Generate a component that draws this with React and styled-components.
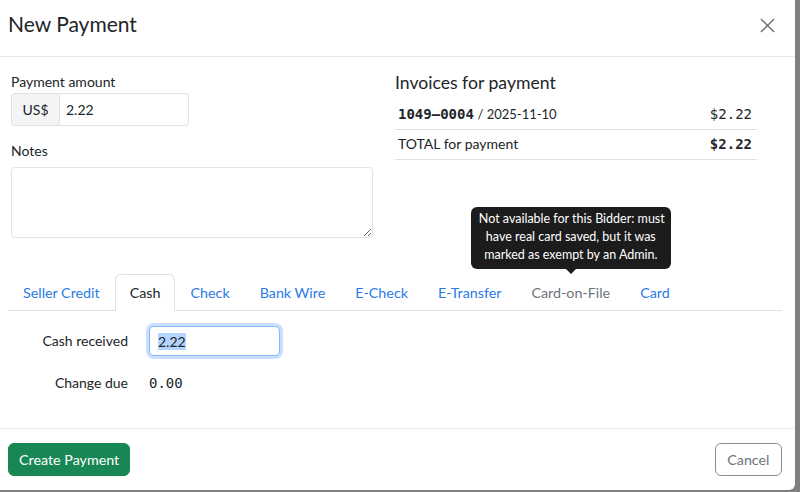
import { useEffect, useRef } from 'react';
import styled, { createGlobalStyle } from 'styled-components';

const GlobalStyle = createGlobalStyle`
  html, body {
    margin: 0;
    padding: 0;
  }

  body {
    background: #7f7f7f;
    font-family: Lato, "Noto Sans", sans-serif;
    color: #212529;
    overflow: hidden;
  }

  * {
    box-sizing: border-box;
  }
`;

const Page = styled.div`
  width: 800px;
  height: 492px;
`;

const Modal = styled.div`
  width: 795px;
  height: 490px;
  background: #fff;
  border-bottom-right-radius: 6px;
  display: flex;
  flex-direction: column;
`;

const Header = styled.div`
  height: 57px;
  border-bottom: 1px solid #e6e8ea;
  display: flex;
  align-items: flex-start;
  justify-content: space-between;
  padding: 12px 20px 0 8px;
`;

const Title = styled.h5`
  margin: 0;
  font-size: 21px;
  line-height: 24px;
  font-weight: 400;
  color: #212529;
`;

const CloseButton = styled.button`
  margin-top: 6px;
  width: 15px;
  height: 15px;
  padding: 0;
  border: none;
  background: none;
  color: #6b6b6b;
  cursor: pointer;

  svg {
    display: block;
    width: 15px;
    height: 15px;
  }
`;

const Body = styled.div`
  padding-top: 15px;
`;

const TopRow = styled.div`
  display: grid;
  grid-template-columns: 362px 362px;
  column-gap: 22px;
  padding-left: 11px;
`;

const Column = styled.div`
  display: flex;
  flex-direction: column;
`;

const FieldLabel = styled.label`
  font-size: 14px;
  line-height: 20px;
  margin: ${(p) => (p.$spaced ? '15px 0 6px' : '0 0 1px')};
`;

const InputGroup = styled.div`
  display: flex;
  width: 178px;
  height: 33px;
`;

const Addon = styled.span`
  width: 49px;
  display: flex;
  align-items: center;
  justify-content: center;
  font-size: 14px;
  background: #f3f4f5;
  border: 1px solid #dfe2e6;
  border-radius: 4px 0 0 4px;
`;

const AmountInput = styled.input`
  flex: 1;
  min-width: 0;
  font: inherit;
  font-size: 14px;
  color: #212529;
  padding: 0 6px;
  border: 1px solid #dfe2e6;
  border-left: none;
  border-radius: 0 4px 4px 0;
  outline: none;
`;

const NotesArea = styled.textarea`
  width: 362px;
  height: 71px;
  border: 1px solid #dfe2e6;
  border-radius: 4px;
  font: inherit;
  font-size: 14px;
  padding: 6px 8px;
  outline: none;
`;

const SectionTitle = styled.h5`
  margin: 0 0 6px;
  font-size: 17.6px;
  line-height: 22px;
  font-weight: 400;
`;

const InvoiceRow = styled.div`
  display: flex;
  align-items: baseline;
  justify-content: space-between;
  padding: 4px 5px 5px 3px;
  border-bottom: 1px solid #dee2e6;
  font-size: 14px;
  line-height: 20px;
`;

const Mono = styled.span`
  font-family: "DejaVu Sans Mono", "Liberation Mono", monospace;
  font-size: 14px;
  font-weight: ${(p) => (p.$bold ? 700 : 400)};
`;

const InvoiceDate = styled.span`
  font-size: 13px;
`;

const Tabs = styled.nav`
  display: flex;
  margin: 36px 13px 0 8px;
  border-bottom: 1px solid #dee2e6;
  height: 37px;
`;

const Tab = styled.a`
  position: relative;
  height: 37px;
  display: flex;
  align-items: center;
  padding: 0 14px;
  font-size: 14.3px;
  line-height: 20px;
  text-decoration: none;
  cursor: pointer;
  border: 1px solid transparent;
  border-radius: 6px 6px 0 0;
  color: ${(p) => (p.$disabled ? '#6c757d' : p.$active ? '#212529' : '#2a7be6')};

  ${(p) =>
    p.$active &&
    `
    background: #fff;
    border-color: #dee2e6 #dee2e6 #fff;
  `}
`;

const Tooltip = styled.div`
  position: absolute;
  bottom: calc(100% + 6px);
  left: 50%;
  transform: translateX(-50%);
  width: 200px;
  padding: 3px 8px 5px;
  background: #1c1c1c;
  color: #fff;
  border-radius: 6px;
  font-size: 12.5px;
  line-height: 18px;
  text-align: center;
  white-space: nowrap;

  &::after {
    content: '';
    position: absolute;
    top: 100%;
    left: 50%;
    margin-left: -5px;
    border: 5px solid transparent;
    border-top-color: #1c1c1c;
    border-bottom: none;
  }
`;

const Pane = styled.div`
  padding: 15px 0 0 8px;
  display: flex;
  flex-direction: column;
  gap: 17px;
`;

const FormRow = styled.div`
  display: flex;
  align-items: ${(p) => (p.$baseline ? 'baseline' : 'center')};
`;

const RowLabel = styled.label`
  width: 120px;
  margin-right: 21px;
  text-align: right;
  font-size: 14px;
  line-height: 20px;
`;

const CashInput = styled.input`
  width: 131px;
  height: 30px;
  padding: 0 8px;
  font: inherit;
  font-size: 14px;
  color: #212529;
  border: 1px solid #86b7fe;
  border-radius: 5px;
  outline: none;
  box-shadow: 0 0 0 3px rgba(13, 110, 253, 0.22);

  &::selection {
    background: #b4d5fe;
    color: #212529;
  }
`;

const Footer = styled.div`
  margin-top: auto;
  height: 62px;
  border-top: 1px solid #e6e8ea;
  padding: 14px 13px 0 8px;
  display: flex;
  align-items: flex-start;
  justify-content: space-between;
`;

const Button = styled.button`
  height: 33px;
  padding: 0 ${(p) => (p.$variant === 'success' ? '10px' : '11.5px')};
  font-family: inherit;
  font-size: 14.3px;
  border-radius: 6px;
  cursor: pointer;
  background: ${(p) => (p.$variant === 'success' ? '#198754' : '#fff')};
  color: ${(p) => (p.$variant === 'success' ? '#fff' : '#6c757d')};
  border: 1px solid ${(p) => (p.$variant === 'success' ? '#198754' : '#8a8f94')};
`;

const methods = [
  { key: 'seller', label: 'Seller Credit' },
  { key: 'cash', label: 'Cash' },
  { key: 'check', label: 'Check' },
  { key: 'wire', label: 'Bank Wire' },
  { key: 'echeck', label: 'E-Check' },
  { key: 'etransfer', label: 'E-Transfer' },
  { key: 'cof', label: 'Card-on-File', disabled: true },
  { key: 'card', label: 'Card' },
];

const App = () => {
  const cashRef = useRef(null);

  useEffect(() => {
    if (cashRef.current) {
      cashRef.current.focus();
      cashRef.current.select();
    }
  }, []);

  return (
    <Page>
      <GlobalStyle />
      <Modal>
        <Header>
          <Title>New Payment</Title>
          <CloseButton aria-label="Close">
            <svg viewBox="0 0 16 16" fill="none" stroke="currentColor" strokeWidth="1.4">
              <path d="M1 1L15 15M15 1L1 15" />
            </svg>
          </CloseButton>
        </Header>

        <Body>
          <TopRow>
            <Column>
              <FieldLabel>Payment amount</FieldLabel>
              <InputGroup>
                <Addon>US$</Addon>
                <AmountInput defaultValue="2.22" />
              </InputGroup>
              <FieldLabel $spaced>Notes</FieldLabel>
              <NotesArea />
            </Column>

            <Column>
              <SectionTitle>Invoices for payment</SectionTitle>
              <InvoiceRow>
                <span>
                  <Mono $bold>1049–0004</Mono> <InvoiceDate>/ 2025-11-10</InvoiceDate>
                </span>
                <Mono>$2.22</Mono>
              </InvoiceRow>
              <InvoiceRow>
                <span>TOTAL for payment</span>
                <Mono $bold>$2.22</Mono>
              </InvoiceRow>
            </Column>
          </TopRow>

          <Tabs>
            {methods.map((m) => (
              <Tab key={m.key} $active={m.key === 'cash'} $disabled={m.disabled}>
                {m.label}
                {m.disabled && (
                  <Tooltip>
                    Not available for this Bidder: must
                    <br />
                    have real card saved, but it was
                    <br />
                    marked as exempt by an Admin.
                  </Tooltip>
                )}
              </Tab>
            ))}
          </Tabs>

          <Pane>
            <FormRow>
              <RowLabel>Cash received</RowLabel>
              <CashInput ref={cashRef} defaultValue="2.22" />
            </FormRow>
            <FormRow $baseline>
              <RowLabel>Change due</RowLabel>
              <Mono>0.00</Mono>
            </FormRow>
          </Pane>
        </Body>

        <Footer>
          <Button $variant="success">Create Payment</Button>
          <Button>Cancel</Button>
        </Footer>
      </Modal>
    </Page>
  );
};

export default App;
